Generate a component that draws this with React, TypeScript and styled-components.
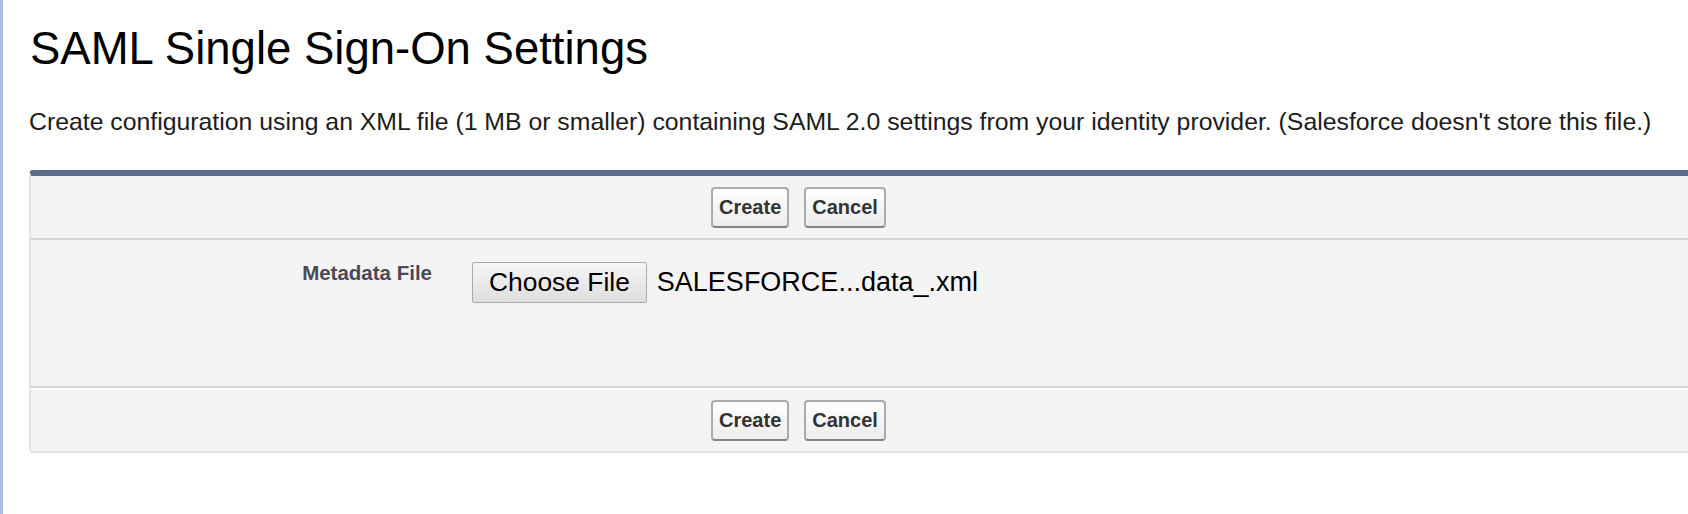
import styled, { createGlobalStyle } from "styled-components";

const GlobalStyle = createGlobalStyle`
  html,
  body {
    margin: 0;
    padding: 0;
    background: #ffffff;
    overflow: hidden;
  }

  body {
    font-family: "Liberation Sans", Arial, sans-serif;
    color: #000000;
  }
`;

const App = () => {
  return (
    <>
      <GlobalStyle />
      <Page>
        <Title>SAML Single Sign-On Settings</Title>
        <Description>
          Create configuration using an XML file (1 MB or smaller) containing
          SAML 2.0 settings from your identity provider. (Salesforce doesn't
          store this file.)
        </Description>
        <Panel>
          <ButtonBar>
            <Button>Create</Button>
            <Button>Cancel</Button>
          </ButtonBar>
          <FieldRow>
            <Label>Metadata File</Label>
            <Data>
              <ChooseFile>Choose File</ChooseFile>
              <FileName>SALESFORCE...data_.xml</FileName>
            </Data>
          </FieldRow>
          <ButtonBar $bottom>
            <Button>Create</Button>
            <Button>Cancel</Button>
          </ButtonBar>
        </Panel>
      </Page>
    </>
  );
};

export default App;

const Page = styled.div`
  box-sizing: border-box;
  min-height: 514px;
  border-left: 3px solid #aebbe4;
  padding: 23px 0 0 26px;
`;

const Title = styled.h1`
  margin: 0;
  padding-left: 1px;
  font-size: 45.5px;
  font-weight: normal;
  line-height: 52px;
  color: #000000;
`;

const Description = styled.p`
  margin: 32px 0 0;
  font-size: 24.8px;
  line-height: 30px;
  white-space: nowrap;
  color: #1c1c1c;
`;

const Panel = styled.div`
  margin-top: 33px;
  width: 1700px;
  background: #f4f4f4;
  border-top: 6px solid #5a6a8b;
  border-left: 2px solid #e2e2e2;
  border-bottom: 2px solid #e2e2e2;
  border-radius: 4px;
`;

const ButtonBar = styled.div<{ $bottom?: boolean }>`
  box-sizing: border-box;
  display: flex;
  align-items: center;
  gap: 15px;
  height: ${(p) => (p.$bottom ? "63px" : "64px")};
  padding-left: 680px;
  border-top: ${(p) => (p.$bottom ? "2px solid #ffffff" : "none")};
  border-bottom: ${(p) => (p.$bottom ? "none" : "2px solid #d4d4d4")};
`;

const Button = styled.button`
  box-sizing: border-box;
  height: 41px;
  padding: 0 6px;
  font-family: "Liberation Sans", Arial, sans-serif;
  font-size: 20px;
  font-weight: bold;
  color: #333333;
  background: linear-gradient(#ffffff, #ececec);
  border: 2px solid #ababab;
  border-bottom-color: #848484;
  border-radius: 4px;
`;

const FieldRow = styled.div`
  display: grid;
  grid-template-columns: 421px 1fr;
  height: 148px;
  box-sizing: border-box;
  border-bottom: 2px solid #d4d4d4;
`;

const Label = styled.div`
  box-sizing: border-box;
  padding: 21px 20px 0 0;
  text-align: right;
  font-size: 20.5px;
  font-weight: bold;
  line-height: 24px;
  color: #4a4a56;
`;

const Data = styled.div`
  display: flex;
  align-items: center;
  align-self: start;
  gap: 10px;
  padding: 22px 0 0 20px;
`;

const ChooseFile = styled.button`
  box-sizing: border-box;
  height: 41px;
  padding: 0 16px;
  font-family: "Liberation Sans", Arial, sans-serif;
  font-size: 26.4px;
  color: #000000;
  background: linear-gradient(#f6f6f6, #dedede);
  border: 1px solid #a9a9a9;
  border-radius: 2px;
`;

const FileName = styled.span`
  font-size: 27px;
  color: #000000;
`;
